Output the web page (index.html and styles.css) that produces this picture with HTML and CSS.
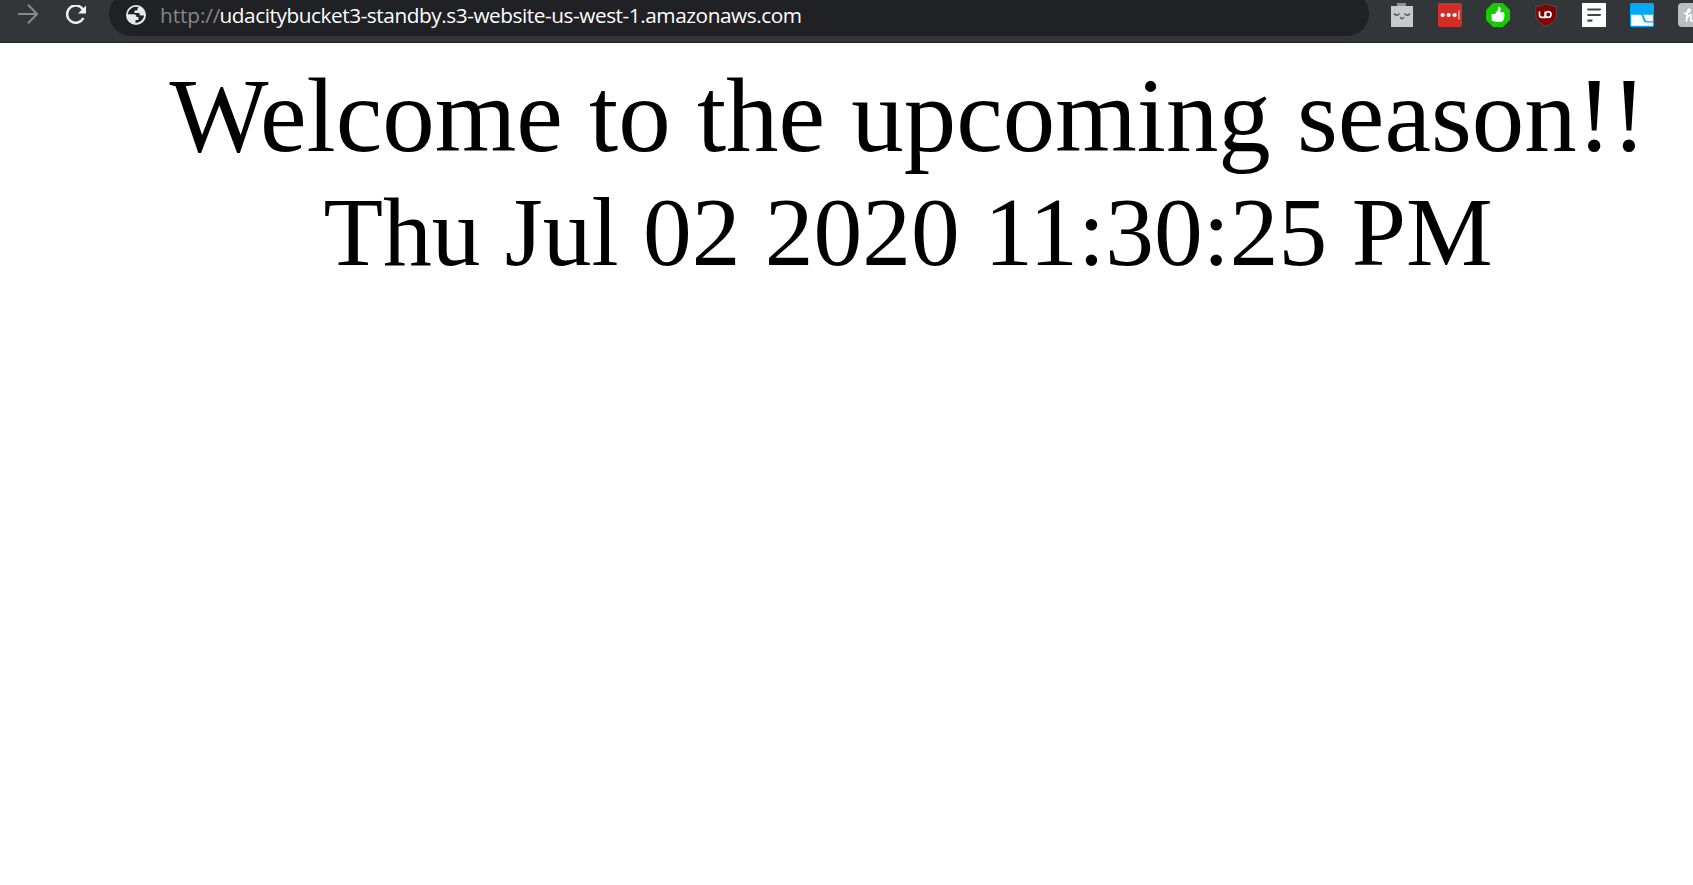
FILE: index.html
```
<!DOCTYPE html>
<html lang="en">
<head>
<meta charset="utf-8">
<title>Welcome</title>
<link rel="stylesheet" href="styles.css">
</head>
<body>
<header class="toolbar">
  <svg class="forward" viewBox="0 0 20 20"><path d="M0 10H18.500M10 .8L19 10L10 19.200"/></svg>
  <svg class="reload" viewBox="0 0 22 20"><path class="arc" d="M18 4.500A8.600 8.600 0 1 0 18.400 13"/><path class="tip" d="M21 .5V8.500H13Z"/></svg>
  <div class="address">
    <svg class="globe" viewBox="0 0 20 20"><circle cx="10" cy="10" r="10"/><path d="M8.500 1.900C4.800 2.500 2 5.900 1.900 9.500H8.500C10 9.500 10.500 10.500 10.500 12H12.500V15H9V17.900C13.900 18 17.700 14.500 18 10.500H15.500C14 10.500 13.300 9.600 13.300 7.900H8.500V5.500H10.500C11.500 5.500 11.600 4.500 11.600 3.300L13 2.600Q11 1.700 8.500 1.900Z"/><path class="land" d="M1.500 9.500H7.500C9 9.500 9.500 10.500 9.500 12V17.900C4.500 17.500 1.500 14 1.500 9.500Z"/></svg>
    <div class="url"><span class="scheme">http://</span><span class="host">udacitybucket3-standby.s3-website-us-west-1.amazonaws.com</span></div>
  </div>
  <div class="extensions">
    <svg viewBox="0 0 24 24"><path fill="#929292" d="M7 0H16V4H7Z"/><path fill="#c9c9c9" d="M1 3H23V24H1Z"/><path fill="none" stroke="#505050" stroke-width="1.300" d="M4 10.500Q6.500 14 9.500 10.500M14.500 10.500Q17.500 14 20 10.500M10 14Q12 17.500 14 14"/></svg>
    <svg viewBox="0 0 24 24"><rect width="24" height="24" rx="2" fill="#d32d27"/><g fill="#fff"><circle cx="4.600" cy="12" r="2.100"/><circle cx="10.600" cy="12" r="2.100"/><circle cx="16.600" cy="12" r="2.100"/><path fill="#f4c5c2" d="M20.300 7.500H21.500V16.500H20.300Z"/></g></svg>
    <svg viewBox="0 0 24 24"><path fill="#15cc00" d="M7 0H17L24 7V17L17 24H7L0 17V7Z"/><path fill="#fff" d="M5.500 11H9L12 6.800V4.500Q12 3.500 13 3.500Q14.800 4 14.700 6.500L14.200 9.300H17.200Q19 9.500 18.300 11.500Q19.200 12.600 18.100 14Q18.600 15.700 17.500 16.500Q17.600 18.500 15.500 18.700H10L5.800 17.800Z"/></svg>
    <svg viewBox="0 0 24 24"><path fill="#800000" stroke="#655252" stroke-width=".8" d="M12 .6C9 2.700 6 3.400 1.800 3.400V11.500C1.800 17 6.500 20.500 12 23.500C17.500 20.500 22.200 17 22.200 11.500V3.400C18 3.400 15 2.700 12 .6Z"/><path fill="none" stroke="#fff" stroke-width="1.700" d="M5.500 8.500V12.300Q5.500 14.300 7.800 14.300H11.200V8.500"/><circle cx="14.200" cy="11.500" r="2.800" fill="none" stroke="#fff" stroke-width="1.700"/></svg>
    <svg viewBox="0 0 24 24"><path fill="#fff" d="M0 0H24V24H0Z"/><path fill="none" stroke="#444" stroke-width="2.100" stroke-linecap="round" d="M6.200 6.500H18M6.200 12H18M6.200 17.600H9.600"/></svg>
    <svg viewBox="0 0 24 24"><rect width="24" height="24" rx="1.500" fill="#03a9f4"/><path fill="#fff" d="M1.200 11.800H10.500C13 11.800 12 18.800 16 19.600H22.800V22.800H1.200ZM13 11.800H22.800V18.300H17C14.500 17.800 15 14 13 11.800Z"/></svg>
    <svg viewBox="0 0 15 24"><path fill="#bdbdbd" d="M4 0H15V24H4Q0 24 0 20V4Q0 0 4 0Z"/><path fill="none" stroke="#fff" stroke-width="1.700" stroke-linecap="round" d="M6.500 10.500C9.500 10.500 12.500 8.500 11.800 6.500C11 5 9.500 8 9.300 10L8.500 18M8.800 15C10.500 12 12.500 11.200 13 12.500C13.400 14 12 16 12.800 17.500Q13.500 18.500 15 17.500"/></svg>
  </div>
</header>
<main class="page">
  <div class="welcome">Welcome to the upcoming season!!</div>
  <div class="date">Thu Jul 02 2020 11:30:25 PM</div>
</main>
</body>
</html>
```
FILE: styles.css
```
body { margin: 0; background: #fff; overflow: hidden; }
.toolbar {
  box-sizing: border-box;
  height: 43px;
  background: #323639;
  border-bottom: 1px solid #1f2023;
  display: flex;
  align-items: flex-start;
  overflow: hidden;
}
.toolbar svg { flex: none; display: block; }
.forward { width: 20px; height: 20px; margin: 4px 0 0 18px; fill: none; stroke: #868a8d; stroke-width: 2; }
.reload { width: 22px; height: 20px; margin: 4.500px 0 0 27px; }
.arc { fill: none; stroke: #f1f1f1; stroke-width: 2.400; }
.tip { fill: #f1f1f1; }
.address {
  box-sizing: border-box;
  flex: none;
  width: 1260px;
  height: 44px;
  margin: -8px 21px 0 22px;
  padding: 13px 0 0 17px;
  border-radius: 22px;
  background: #202124;
  display: flex;
  align-items: flex-start;
}
.globe { width: 20px; height: 20px; fill: #e8e8e8; }
.globe path { fill: #202124; }
.globe .land { fill: #e8e8e8; }
.url {
  display: flex;
  margin: -4px 0 0 14px;
  font: 20.800px/28px "Open Sans", "Noto Sans", sans-serif;
  white-space: nowrap;
  color: #fff;
}
.scheme { width: 59.500px; color: #85878a; letter-spacing: -0.100px; }
.host { letter-spacing: -0.450px; }
.extensions { display: flex; flex: none; gap: 24px; padding-top: 3px; }
.extensions svg { width: 24px; height: 24px; }
.extensions svg:last-child { width: 15px; }
.page {
  padding: 15px 0 0 168px;
  width: 1480px;
  font-family: "Liberation Serif", "Times New Roman", serif;
  text-align: center;
  white-space: nowrap;
  color: #000;
}
.welcome { font-size: 104.900px; line-height: 116px; }
.date { padding-top: 2px; font-size: 97.500px; line-height: 112px; }
```
